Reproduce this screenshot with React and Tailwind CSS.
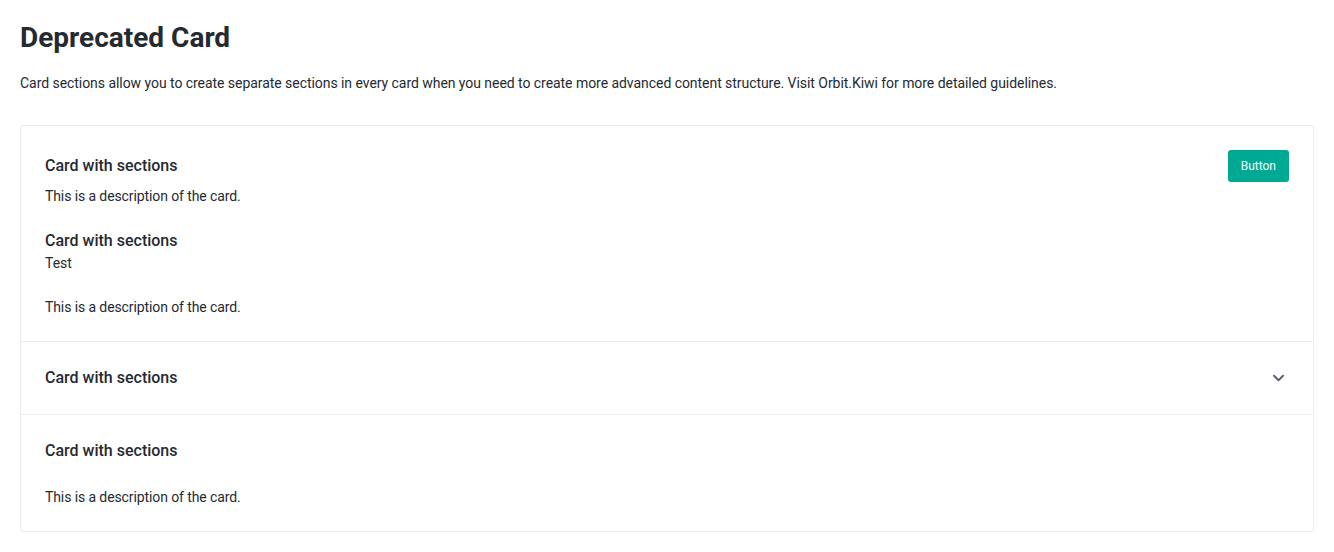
import React from 'react';

function Chevron() {
    return (
        <svg width="20" height="20" viewBox="0 0 20 20" fill="none" className="text-[#4f5e71]">
            <path d="M5 7.75 9.5 12.25 14 7.75" stroke="currentColor" strokeWidth="1.8" strokeLinecap="round" strokeLinejoin="round" />
        </svg>
    );
}

export default function App() {
    return (
        <div className="min-h-screen bg-white px-5 pt-[19px] text-[#252a31]" style={{ fontFamily: 'Roboto, "Liberation Sans", sans-serif' }}>
            <h1 className="text-[28px] leading-[38px] font-bold">Deprecated Card</h1>
            <p className="mt-[16px] text-sm leading-5 tracking-[-0.05px]">
                Card sections allow you to create separate sections in every card when you need to create more advanced content structure. Visit Orbit.Kiwi for more detailed guidelines.
            </p>

            <div className="mt-[32px] rounded-[3px] border border-[#e8edf1] bg-white">
                <section className="p-6">
                    <div className="flex items-center justify-between">
                        <h2 className="text-base font-medium leading-6">Card with sections</h2>
                        <button className="h-8 rounded-[3px] bg-[#00a991] px-[13px] text-xs font-normal text-white">Button</button>
                    </div>
                    <p className="mt-1 text-sm leading-5 tracking-[-0.1px]">This is a description of the card.</p>
                    <h3 className="mt-[23px] text-base font-medium leading-6">Card with sections</h3>
                    <p className="text-sm leading-5">Test</p>
                    <p className="mt-6 text-sm leading-5 tracking-[-0.1px]">This is a description of the card.</p>
                </section>

                <section className="flex items-center justify-between border-t border-[#e8edf1] px-6 py-6">
                    <h2 className="text-base font-medium leading-6">Card with sections</h2>
                    <Chevron />
                </section>

                <section className="border-t border-[#e8edf1] p-6">
                    <h2 className="text-base font-medium leading-6">Card with sections</h2>
                    <p className="mt-6 text-sm leading-5 tracking-[-0.1px]">This is a description of the card.</p>
                </section>
            </div>
        </div>
    );
}
